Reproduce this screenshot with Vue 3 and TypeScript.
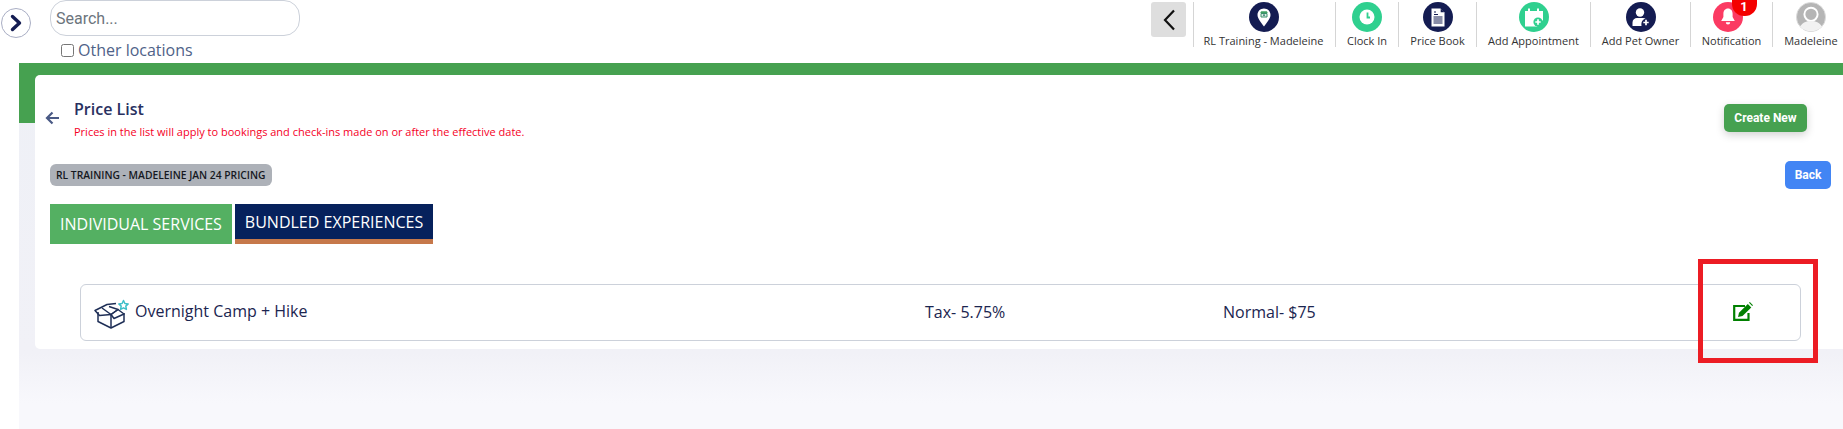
<template>
  <div class="page">
    <button class="side-toggle" type="button" aria-label="Expand menu">
      <svg width="16" height="18" viewBox="0 0 16 18"><path d="M4.500 2.500 11.500 9l-7 6.500" fill="none" stroke="#141c52" stroke-width="3.400" stroke-linecap="round" stroke-linejoin="round" /></svg>
    </button>

    <header class="topbar">
      <div class="search-box">
        <input class="search-input" type="text" placeholder="Search..." />
        <label class="other-loc"><input type="checkbox" /> Other locations</label>
      </div>
      <div class="top-actions">
        <button class="collapse-btn" type="button" aria-label="Collapse">
          <svg width="14" height="24" viewBox="0 0 14 24"><path d="M12 2.500 3 12l9 9.500" fill="none" stroke="#111" stroke-width="2.200" /></svg>
        </button>
        <div v-for="item in actions" :key="item.label" class="action" :class="item.icon" :style="{ width: item.width + 'px' }">
          <span class="action-icon" :class="item.tone">
            <svg v-if="item.icon === 'pin'" width="14" height="19" viewBox="0 0 14 19"><path d="M7 .5c3.700 0 6.500 2.800 6.500 6.400C13.500 10.500 9.500 15 7 18.500 4.500 15 .5 10.500 .5 6.900 .5 3.300 3.300 .5 7 .5z" fill="#fff" /><path d="M4.200 3.200h5.600L10.800 5H3.200z" fill="#3f9f63" /><path d="M4 5.500h6v3.500H4z" fill="#d9efe3" stroke="#3a8f6a" stroke-width="1" /><path d="M6 6.500h2v1.200H6z" fill="#2c6f6a" /></svg>
            <svg v-else-if="item.icon === 'clock'" width="16" height="16" viewBox="0 0 16 16"><circle cx="8" cy="8" r="7.500" fill="#fff" /><path d="M8.500 3.500v5h2.500" fill="none" stroke="#2fd08f" stroke-width="1.800" /></svg>
            <svg v-else-if="item.icon === 'doc'" width="14" height="19" viewBox="0 0 14 19"><path d="M.5 .5h9l4 4v14H.5z" fill="#fff" /><path d="M9.700 .5v3.800h3.800z" fill="#141c52" /><path d="M3 4h2M3 6.500h4M2.500 9h9M2.500 11h9M2.500 13h9M2.500 15h9" stroke="#141c52" stroke-width="1.100" /></svg>
            <svg v-else-if="item.icon === 'cal'" width="18" height="19" viewBox="0 0 18 19"><path d="M0 3h3V.5h2V3h7V.5h2V3h4v9l-6 6.500H0z" fill="#fff" /><circle cx="13" cy="14" r="4.600" fill="#2fd08f" /><path d="M13 11.300v5.400M10.300 14h5.400" stroke="#fff" stroke-width="1.700" /></svg>
            <svg v-else-if="item.icon === 'user'" width="18" height="19" viewBox="0 0 18 19"><circle cx="8" cy="4.500" r="4.200" fill="#fff" /><path d="M.5 18v-3.500C.5 11.500 2.800 10 5 10h6c1 0 2 .3 2.600 .8-3 .5-4.600 3-4.100 7.200z" fill="#fff" /><path d="M14 11.800v5.400M11.300 14.500h5.400" stroke="#fff" stroke-width="1.700" /></svg>
            <svg v-else-if="item.icon === 'bell'" width="14" height="18" viewBox="0 0 14 18"><path d="M7 .5c3 0 4.600 2.300 4.600 5.200v3.300l2.200 4H.2l2.200-4V5.700C2.400 2.800 4 .5 7 .5z" fill="#fff" /><path d="M4.800 14.200h4.400a2.200 2.200 0 0 1-4.400 0z" fill="#fff" /></svg>
            <svg v-else width="34" height="34" viewBox="0 0 34 34"><circle cx="17" cy="17" r="16.500" fill="#b5b5b5" stroke="#dcdcdc" /><circle cx="17" cy="14" r="7.500" fill="none" stroke="#fff" stroke-width="2.200" /><path d="M4.500 28c3-5 7-6.500 12.500-6.500S26.500 23 29.500 28C26 31.500 22 33 17 33S8 31.500 4.500 28z" fill="#f2f2f2" /></svg>
            <span v-if="item.badge" class="badge-count">{{ item.badge }}</span>
          </span>
          <span class="action-label">{{ item.label }}</span>
        </div>
      </div>
    </header>

    <main class="main">
      <div class="green-band"></div>
      <section class="card">
        <div class="title-row">
          <svg class="back-arrow" width="15" height="14" viewBox="0 0 15 14"><path d="M14 7H2.500M7.500 1.500 2 7l5.500 5.500" fill="none" stroke="#4a5a85" stroke-width="2.200" /></svg>
          <div class="title-text">
            <h1>Price List</h1>
            <p>Prices in the list will apply to bookings and check-ins made on or after the effective date.</p>
          </div>
          <button class="btn-create" type="button">Create New</button>
        </div>

        <div class="badge-row">
          <span class="pricing-badge">RL TRAINING - MADELEINE JAN 24 PRICING</span>
          <button class="btn-back" type="button">Back</button>
        </div>

        <div class="tabs">
          <button class="tab tab-green" type="button">INDIVIDUAL SERVICES</button>
          <button class="tab tab-navy" type="button">BUNDLED EXPERIENCES</button>
        </div>

        <div class="service-row">
          <div class="service-name">
            <svg width="36" height="32" viewBox="0 0 36 32">
              <g fill="none" stroke="#1f2f57" stroke-width="1.500" stroke-linejoin="round">
                <path d="M4 15v9.500L17 31l13-6.500V16" />
                <path d="M17 17.500V31" />
                <path d="M17 17.500 5.500 18.500 1 13.500 13 7.500 22 6.500" />
                <path d="M17 17.500 24 12.500 30 17 20 21.500z" />
                <path d="M8 11 17 17.500 24 12.500 15 9.500" />
              </g>
              <path d="M29.500 3.500l1.400 3 3.300.4-2.400 2.200.6 3.300-2.900-1.600-2.900 1.600.6-3.300-2.400-2.200 3.300-.4z" fill="none" stroke="#3fbfc9" stroke-width="1.500" stroke-linejoin="round" />
            </svg>
            <span>Overnight Camp + Hike</span>
          </div>
          <span class="service-tax">Tax- 5.75%</span>
          <span class="service-price">Normal- $75</span>
          <span class="service-edit">
            <svg width="20" height="19" viewBox="0 0 20 19">
              <path d="M12 4H1.200v13.800H15.500V11" fill="none" stroke="#008000" stroke-width="2.200" />
              <path d="M5 15 6 10.800 14.800 2 18.300 5.500 9.500 14z" fill="#008000" />
              <path d="M16 .8 16.800 0 20 3.200 19.200 4z" fill="#008000" />
            </svg>
          </span>
        </div>
      </section>
      <div class="highlight"></div>
    </main>
  </div>
</template>

<script setup lang="ts">
interface TopAction {
  label: string
  icon: string
  tone: string
  width: number
  badge?: number
}

const actions: TopAction[] = [
  { label: 'RL Training - Madeleine', icon: 'pin', tone: 'navy', width: 142 },
  { label: 'Clock In', icon: 'clock', tone: 'mint', width: 63 },
  { label: 'Price Book', icon: 'doc', tone: 'navy', width: 78 },
  { label: 'Add Appointment', icon: 'cal', tone: 'mint', width: 114 },
  { label: 'Add Pet Owner', icon: 'user', tone: 'navy', width: 100 },
  { label: 'Notification', icon: 'bell', tone: 'rose', width: 82, badge: 1 },
  { label: 'Madeleine', icon: 'avatar', tone: 'plain', width: 71 }
]
</script>

<style>
html,
body {
  margin: 0;
  background: #fff;
}
</style>

<style scoped>
.page {
  position: relative;
  width: 1843px;
  height: 429px;
  overflow: hidden;
  background: #fff;
  font-family: "Open Sans", sans-serif;
}

.side-toggle {
  position: absolute;
  left: 1px;
  top: 8px;
  width: 30px;
  height: 30px;
  padding: 0;
  display: flex;
  align-items: center;
  justify-content: center;
  background: #fff;
  border: 1px solid #a9aec4;
  border-radius: 50%;
}

.topbar {
  height: 63px;
  padding-left: 50px;
  display: flex;
  justify-content: space-between;
  box-sizing: border-box;
}

.search-input {
  display: block;
  width: 250px;
  height: 36px;
  box-sizing: border-box;
  padding: 0 5px;
  border: 1px solid #ccd1da;
  border-radius: 16px;
  font-family: Roboto, sans-serif;
  font-size: 16px;
  outline: none;
}

.search-input::placeholder {
  color: #6c757d;
}

.other-loc {
  display: flex;
  align-items: center;
  margin: 3px 0 0 11px;
  height: 22px;
  gap: 4px;
  color: #4f6288;
  font-size: 16px;
}

.other-loc input {
  width: 13px;
  height: 13px;
  margin: 0;
}

.top-actions {
  display: flex;
  align-items: flex-start;
  padding-top: 2px;
}

.collapse-btn {
  width: 35px;
  height: 35px;
  margin-right: 7px;
  padding: 0;
  display: flex;
  align-items: center;
  justify-content: center;
  background: #dedede;
  border: 0;
  border-radius: 3px;
}

.action {
  height: 45px;
  display: flex;
  flex-direction: column;
  align-items: center;
  box-sizing: border-box;
  border-left: 1px solid #d5d5d5;
}

.action.pin {
  padding-right: 2px;
}

.action.bell .action-icon {
  margin-right: 8px;
}

.action.avatar {
  padding-left: 6px;
}

.action-icon {
  position: relative;
  width: 30px;
  height: 30px;
  display: flex;
  align-items: center;
  justify-content: center;
  flex-shrink: 0;
  border-radius: 50%;
}

.navy { background: #141c52; }
.mint { background: #2fd08f; }
.rose { background: #fb3a62; }

.badge-count {
  position: absolute;
  top: -2px;
  right: -14px;
  width: 25px;
  height: 16px;
  border-radius: 0 0 12px 12px;
  background: #f40000;
  color: #fff;
  font-family: Roboto, sans-serif;
  font-size: 13px;
  font-weight: 700;
  line-height: 13px;
  text-align: center;
}

.action-label {
  margin-top: 2px;
  font-size: 11px;
  line-height: 14px;
  color: #333;
  white-space: nowrap;
}

.main {
  position: relative;
  height: 366px;
  margin-left: 19px;
  background: linear-gradient(#eef0f6 0, #f1f1f7 290px, #f8f8fc 340px);
}

.green-band {
  height: 60px;
  background: #46a150;
}

.card {
  position: relative;
  height: 274px;
  margin: -48px 0 0 16px;
  padding: 0 12px 0 15px;
  box-sizing: border-box;
  background: #fff;
  border-radius: 5px 0 0 5px;
}

.title-row {
  display: flex;
  align-items: flex-start;
  height: 89px;
}

.back-arrow {
  margin: 36px 14px 0 -5px;
}

.title-text {
  flex: 1;
  padding-top: 22px;
}

.title-text h1 {
  margin: 0;
  font-size: 16px;
  font-weight: 600;
  line-height: 24px;
  color: #28305f;
}

.title-text p {
  margin: 4px 0 0;
  font-size: 11px;
  line-height: 14px;
  color: #f5001f;
}

.btn-create,
.btn-back {
  height: 28px;
  border: 0;
  border-radius: 5px;
  color: #fff;
  font-family: Roboto, sans-serif;
  font-size: 12px;
  font-weight: 700;
}

.btn-create {
  width: 83px;
  margin: 29px 24px 0 0;
  background: #46a150;
  box-shadow: 0 3px 8px rgba(0, 0, 0, 0.18);
}

.badge-row {
  display: flex;
  align-items: flex-start;
  justify-content: space-between;
  height: 40px;
}

.pricing-badge {
  height: 22px;
  padding: 0 6px;
  border-radius: 6px;
  background: #adb1b8;
  color: #15181e;
  font-size: 10.300px;
  font-weight: 600;
  line-height: 22px;
  white-space: nowrap;
}

.btn-back {
  width: 46px;
  margin-top: -3px;
  background: #4285f4;
}

.tabs {
  display: flex;
  gap: 3px;
  height: 40px;
}

.tab {
  padding: 0;
  border: 0;
  color: #fff;
  font-family: "Open Sans", sans-serif;
  font-size: 16px;
  box-sizing: border-box;
}

.tab-green {
  width: 182px;
  background: #54b062;
}

.tab-navy {
  width: 198px;
  background: #06215c;
  border-bottom: 5px solid #c6784a;
}

.service-row {
  display: flex;
  align-items: center;
  width: 1721px;
  height: 57px;
  margin: 40px 0 0 30px;
  padding-left: 13px;
  box-sizing: border-box;
  border: 1px solid #ccd1da;
  border-radius: 6px;
  color: #1b2550;
  font-size: 16px;
}

.service-name {
  display: flex;
  align-items: center;
  gap: 5px;
  width: 831px;
}

.service-name span {
  margin-bottom: 4px;
}

.service-tax {
  width: 298px;
  margin-bottom: 2px;
}

.service-price {
  width: 509px;
  margin-bottom: 2px;
}

.service-edit {
  display: flex;
  margin: 0 0 2px 1px;
}

.highlight {
  position: absolute;
  left: 1679px;
  top: 196px;
  width: 120px;
  height: 104px;
  box-sizing: border-box;
  border: 5px solid #ec1c24;
}
</style>
